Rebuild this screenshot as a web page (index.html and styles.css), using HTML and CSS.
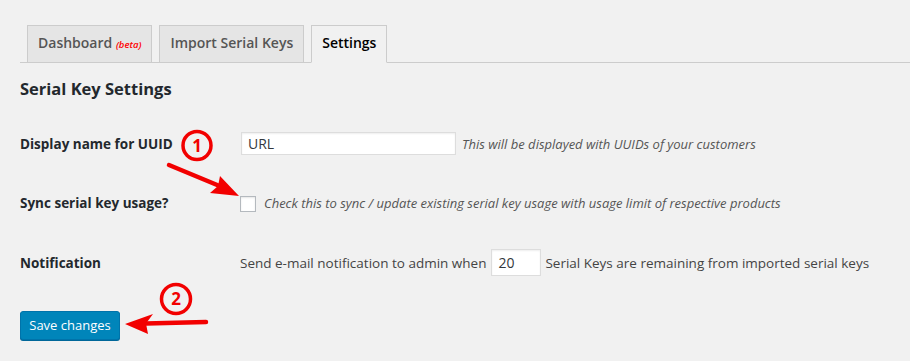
FILE: index.html
```html
<!DOCTYPE html>
<html lang="en">
<head>
    <meta charset="UTF-8">
    <meta name="viewport" content="width=device-width, initial-scale=1.0">
    <title>Serial Key Settings</title>
    <link rel="stylesheet" href="styles.css">
</head>
<body>
    <div class="wrap">
        <nav class="nav-tabs">
            <a href="#" class="nav-tab">Dashboard <span class="beta">(beta)</span></a>
            <a href="#" class="nav-tab">Import Serial Keys</a>
            <a href="#" class="nav-tab active">Settings</a>
        </nav>

        <h2 class="page-title">Serial Key Settings</h2>

        <form class="settings-form">
            <div class="form-row">
                <label class="row-label" for="uuidName">Display name for UUID</label>
                <div class="row-field">
                    <input type="text" id="uuidName" class="text-input" value="URL">
                    <span class="description">This will be displayed with UUIDs of your customers</span>
                </div>
            </div>

            <div class="form-row">
                <label class="row-label" for="syncUsage">Sync serial key usage?</label>
                <div class="row-field">
                    <input type="checkbox" id="syncUsage" class="check">
                    <span class="description check-text">Check this to sync / update existing serial key usage with usage limit of respective products</span>
                </div>
            </div>

            <div class="form-row">
                <div class="row-label">Notification</div>
                <div class="row-field plain">
                    <span>Send e-mail notification to admin when</span>
                    <input type="number" class="num-input" value="20">
                    <span>Serial Keys are remaining from imported serial keys</span>
                </div>
            </div>

            <button type="submit" class="save-btn">Save changes</button>
        </form>
    </div>

    <!-- Annotation overlay -->
    <svg class="annotations" width="910" height="361" viewBox="0 0 910 361">
        <g fill="none" stroke="#f20000" stroke-width="3.5">
            <circle cx="197" cy="145.5" r="14"/>
            <circle cx="176" cy="299" r="14.5"/>
        </g>
        <g fill="#f20000" font-family="Open Sans, sans-serif" font-weight="700" font-size="17" text-anchor="middle">
            <text x="197" y="151.5">1</text>
            <text x="176" y="305">2</text>
        </g>
        <g stroke="#f20000" stroke-width="4.5" stroke-linecap="round">
            <line x1="169" y1="165" x2="222" y2="187"/>
            <line x1="206" y1="322" x2="146" y2="323.5"/>
        </g>
        <g fill="#f20000">
            <polygon points="239,196 220,176 218,186 210,193"/>
            <polygon points="125,324 153,314 146,323.5 148,334"/>
        </g>
    </svg>
</body>
</html>
```
FILE: styles.css
```css
* {
    box-sizing: border-box;
}

body {
    margin: 0;
    background: #f1f1f1;
    color: #444;
    font-family: 'Open Sans', sans-serif;
    font-size: 13.5px;
    position: relative;
    min-height: 361px;
    overflow: hidden;
}

.wrap {
    padding: 0 0 0 20px;
}

/* Tabs */
.nav-tabs {
    display: flex;
    gap: 7px;
    padding: 25px 0 0 7px;
    border-bottom: 1px solid #ccc;
}

.nav-tab {
    display: block;
    padding: 5px 10px;
    margin-bottom: -1px;
    line-height: 24px;
    font-size: 14px;
    font-weight: 600;
    color: #555;
    text-decoration: none;
    background: #e5e5e5;
    border: 1px solid #ccc;
}

.nav-tab .beta {
    color: #f00;
    font-size: 9.5px;
    font-style: italic;
    font-weight: 600;
}

.nav-tab.active {
    background: #f1f1f1;
    border-bottom-color: #f1f1f1;
    color: #000;
}

/* Heading */
.page-title {
    margin: 16px 0 0;
    font-size: 16.5px;
    line-height: 20px;
    font-weight: 700;
    color: #23282d;
}

/* Form rows */
.settings-form {
    margin-top: 15px;
}

.form-row {
    display: flex;
    align-items: center;
    height: 59.5px;
}

.row-label {
    width: 220px;
    flex-shrink: 0;
    font-size: 13.5px;
    font-weight: 700;
    color: #23282d;
}

.row-field {
    display: flex;
    align-items: center;
}

.text-input {
    width: 215px;
    height: 23px;
    margin: 0 0 0 1px;
    padding: 0 6px;
    font-family: 'Open Sans', sans-serif;
    font-size: 14px;
    color: #32373c;
    background: #fff;
    border: 1px solid #ddd;
    box-shadow: inset 0 1px 2px rgba(0, 0, 0, 0.07);
    outline: none;
}

.description {
    margin-left: 6px;
    font-size: 13px;
    font-style: italic;
    color: #555;
}

.check {
    appearance: none;
    width: 16px;
    height: 16px;
    margin: 1px 0 0;
    background: #fff;
    border: 1px solid #b4b9be;
    box-shadow: inset 0 1px 2px rgba(0, 0, 0, 0.1);
}

.check-text {
    margin-left: 8px;
}

.plain {
    color: #444;
}

.num-input {
    width: 50px;
    height: 27px;
    margin: 0 4px 0 5px;
    padding: 0 6px;
    font-family: 'Open Sans', sans-serif;
    font-size: 14px;
    color: #32373c;
    background: #fff;
    border: 1px solid #ddd;
    box-shadow: inset 0 1px 2px rgba(0, 0, 0, 0.07);
    outline: none;
    -moz-appearance: textfield;
}

.num-input::-webkit-inner-spin-button,
.num-input::-webkit-outer-spin-button {
    -webkit-appearance: none;
    margin: 0;
}

/* Save button */
.save-btn {
    display: block;
    margin-top: 18px;
    width: 100px;
    height: 29px;
    padding: 0;
    white-space: nowrap;
    font-family: 'Open Sans', sans-serif;
    font-size: 13px;
    color: #fff;
    background: #0085ba;
    border: 1px solid #0073aa;
    border-radius: 3px;
    box-shadow: 0 1px 0 #006799;
    cursor: pointer;
}

/* Red annotation overlay */
.annotations {
    position: absolute;
    top: 0;
    left: 0;
    pointer-events: none;
}
```
